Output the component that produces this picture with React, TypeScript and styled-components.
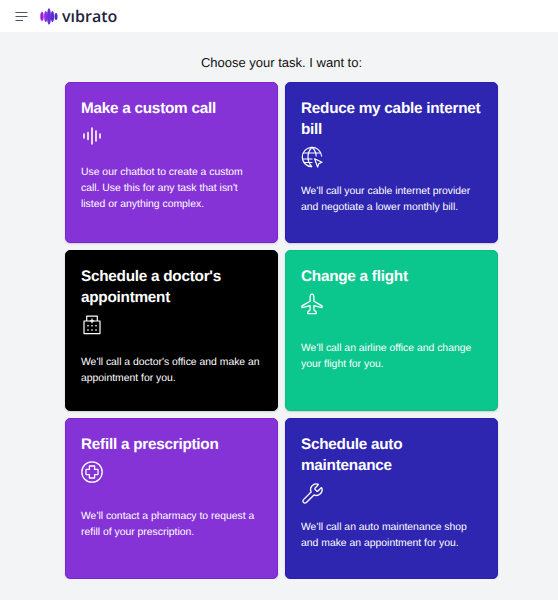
import React from "react";
import styled, { createGlobalStyle } from "styled-components";
import { Wrench } from "lucide-react";

const GlobalStyle = createGlobalStyle`
	html, body {
		margin: 0;
		padding: 0;
		background-color: #f3f4f6;
		font-family: "Liberation Sans", Arial, sans-serif;
		text-rendering: geometricPrecision;
	}
	* {
		box-sizing: border-box;
	}
`;

const Header = styled.header`
	display: flex;
	align-items: center;
	height: 32px;
	padding-left: 15px;
	background-color: #fff;
`;

const MenuButton = styled.button`
	display: flex;
	padding: 0;
	border: 0;
	background: none;
	margin-right: 12px;
`;

const Logo = styled.div`
	display: flex;
	align-items: center;
	gap: 4px;
`;

const LogoText = styled.span`
	font-family: "Open Sans", sans-serif;
	font-size: 16px;
	font-weight: 600;
	line-height: 32px;
	color: #1e2340;
`;

const Main = styled.main`
	padding: 22px 0 0 5px;
`;

const Heading = styled.h1`
	margin: 0 0 11px;
	font-size: 13px;
	font-weight: 400;
	line-height: 17px;
	text-align: center;
	color: #111;
`;

const Grid = styled.div`
	display: grid;
	grid-template-columns: 213px 213px;
	grid-auto-rows: 161px;
	gap: 7px;
	justify-content: center;
`;

const Card = styled.div<{ $bg: string; $edge: string }>`
	display: flex;
	flex-direction: column;
	padding: 15px 15px;
	border: 1px solid ${(p) => p.$edge};
	border-radius: 5px;
	background-color: ${(p) => p.$bg};
	box-shadow: 0 1px 2px rgba(0, 0, 0, 0.15);
	color: #fff;
`;

const Title = styled.h2`
	margin: 0;
	font-size: 15.3px;
	font-weight: 700;
	line-height: 21px;
	letter-spacing: -0.25px;
`;

const IconBox = styled.div`
	display: flex;
	align-items: center;
	height: 22px;
	margin-top: 6px;
`;

const Body = styled.p<{ $shift?: number }>`
	flex: 1;
	display: flex;
	align-items: center;
	margin: 0;
	padding-top: ${(p) => p.$shift ?? 4}px;
	font-size: 10.4px;
	line-height: 15.7px;
`;

const MenuIcon = () => (
	<svg width="13" height="11" viewBox="0 0 13 11" fill="none" stroke="#4b5563" strokeWidth="1">
		<path d="M0.5 1.5H12.5M0.5 5.5H12.5M0.5 9.5H8" />
	</svg>
);

const LogoMark = () => (
	<svg width="18" height="17" viewBox="0 0 18 17">
		<ellipse cx="2" cy="8.5" rx="1.7" ry="4.4" fill="#a21fe0" />
		<ellipse cx="5.8" cy="8.5" rx="1.7" ry="5.6" fill="#8b2fe0" />
		<ellipse cx="9" cy="8.5" rx="2" ry="8.2" fill="#6d2fd8" />
		<ellipse cx="12.4" cy="8.5" rx="1.7" ry="5.6" fill="#5b2ed0" />
		<ellipse cx="16" cy="8.5" rx="1.5" ry="3.6" fill="#4a2cc4" />
	</svg>
);

const WaveIcon = () => (
	<svg width="22" height="22" viewBox="0 0 22 22" fill="none" stroke="#fff" strokeWidth="1.6" strokeLinecap="round">
		<path d="M3 9V13M7 7.5V14.5M11 3V19M15 6V16M19 9V13" />
	</svg>
);

const GlobeIcon = () => (
	<svg width="22" height="22" viewBox="0 0 22 22" fill="none" stroke="#fff" strokeWidth="1.2" strokeLinecap="round" strokeLinejoin="round">
		<path d="M20.6 10A9.7 9.7 0 1 0 10.5 20.7" />
		<path d="M11 1.3C8.4 3.8 7 7.2 7 11S8.4 18 10.8 20.6M11 1.3C13.5 3.6 15 6.6 15.2 10" />
		<path d="M2.4 7H19.6M1.5 13H11M2.8 16.5H11" />
		<path d="M13.6 12.8L21 16.2L17.8 17.6L16.6 21Z" />
	</svg>
);

const HospitalIcon = () => (
	<svg width="20" height="20" viewBox="-2 0 20 20" fill="none" stroke="#fff" strokeWidth="1.2" strokeLinejoin="round">
		<path d="M3.7 6V1.2H14.3V6" />
		<path d="M1 6H17V18.6H1Z" />
		<path d="M9 3.6V8.2M6.8 5.9H11.2" />
		<path d="M4 10.8H6M8 10.8H10M12 10.8H14M4 15H6M8 15H10M12 15H14" strokeWidth="1" />
	</svg>
);

const PlaneIcon = () => (
	<svg width="22" height="22" viewBox="0 0 22 22" fill="none" stroke="#fff" strokeWidth="1.3" strokeLinejoin="round">
		<path d="M11 1.2C12.2 1.2 12.9 3 12.9 5V8.2L20.6 12.6C21 12.9 21.1 13.2 21.1 13.6V14.6L12.9 12.6V17L15.2 19V20.6H6.8V19L9.1 17V12.6L0.9 14.6V13.6C0.9 13.2 1 12.9 1.4 12.6L9.1 8.2V5C9.1 3 9.8 1.2 11 1.2Z" />
	</svg>
);

const CrossIcon = () => (
	<svg width="22" height="22" viewBox="0 0 22 22" fill="none" stroke="#fff" strokeWidth="1.3" strokeLinejoin="round">
		<circle cx="11" cy="11" r="10.2" />
		<path d="M8.4 5H13.6V8.4H17V13.6H13.6V17H8.4V13.6H5V8.4H8.4Z" />
	</svg>
);

const App = () => {
	return (
		<>
			<GlobalStyle />
			<Header>
				<MenuButton>
					<MenuIcon />
				</MenuButton>
				<Logo>
					<LogoMark />
					<LogoText>vıbrato</LogoText>
				</Logo>
			</Header>
			<Main>
				<Heading>Choose your task. I want to:</Heading>
				<Grid>
					<Card $bg="#8533d6" $edge="#7a25d0">
						<Title>Make a custom call</Title>
						<IconBox>
							<WaveIcon />
						</IconBox>
						<Body>Use our chatbot to create a custom call. Use this for any task that isn't listed or anything complex.</Body>
					</Card>
					<Card $bg="#2e25b0" $edge="#2a1fb0">
						<Title>Reduce my cable internet bill</Title>
						<IconBox>
							<GlobeIcon />
						</IconBox>
						<Body>We'll call your cable internet provider and negotiate a lower monthly bill.</Body>
					</Card>
					<Card $bg="#000" $edge="#000">
						<Title>Schedule a doctor's appointment</Title>
						<IconBox>
							<HospitalIcon />
						</IconBox>
						<Body $shift={10}>We'll call a doctor's office and make an appointment for you.</Body>
					</Card>
					<Card $bg="#0bc68d" $edge="#0bbd86">
						<Title>Change a flight</Title>
						<IconBox>
							<PlaneIcon />
						</IconBox>
						<Body>We'll call an airline office and change your flight for you.</Body>
					</Card>
					<Card $bg="#8533d6" $edge="#7a25d0">
						<Title>Refill a prescription</Title>
						<IconBox>
							<CrossIcon />
						</IconBox>
						<Body>We'll contact a pharmacy to request a refill of your prescription.</Body>
					</Card>
					<Card $bg="#2e25b0" $edge="#2a1fb0">
						<Title>Schedule auto maintenance</Title>
						<IconBox>
							<Wrench size={23} strokeWidth={1.4} color="#fff" />
						</IconBox>
						<Body>We'll call an auto maintenance shop and make an appointment for you.</Body>
					</Card>
				</Grid>
			</Main>
		</>
	);
};

export default App;
